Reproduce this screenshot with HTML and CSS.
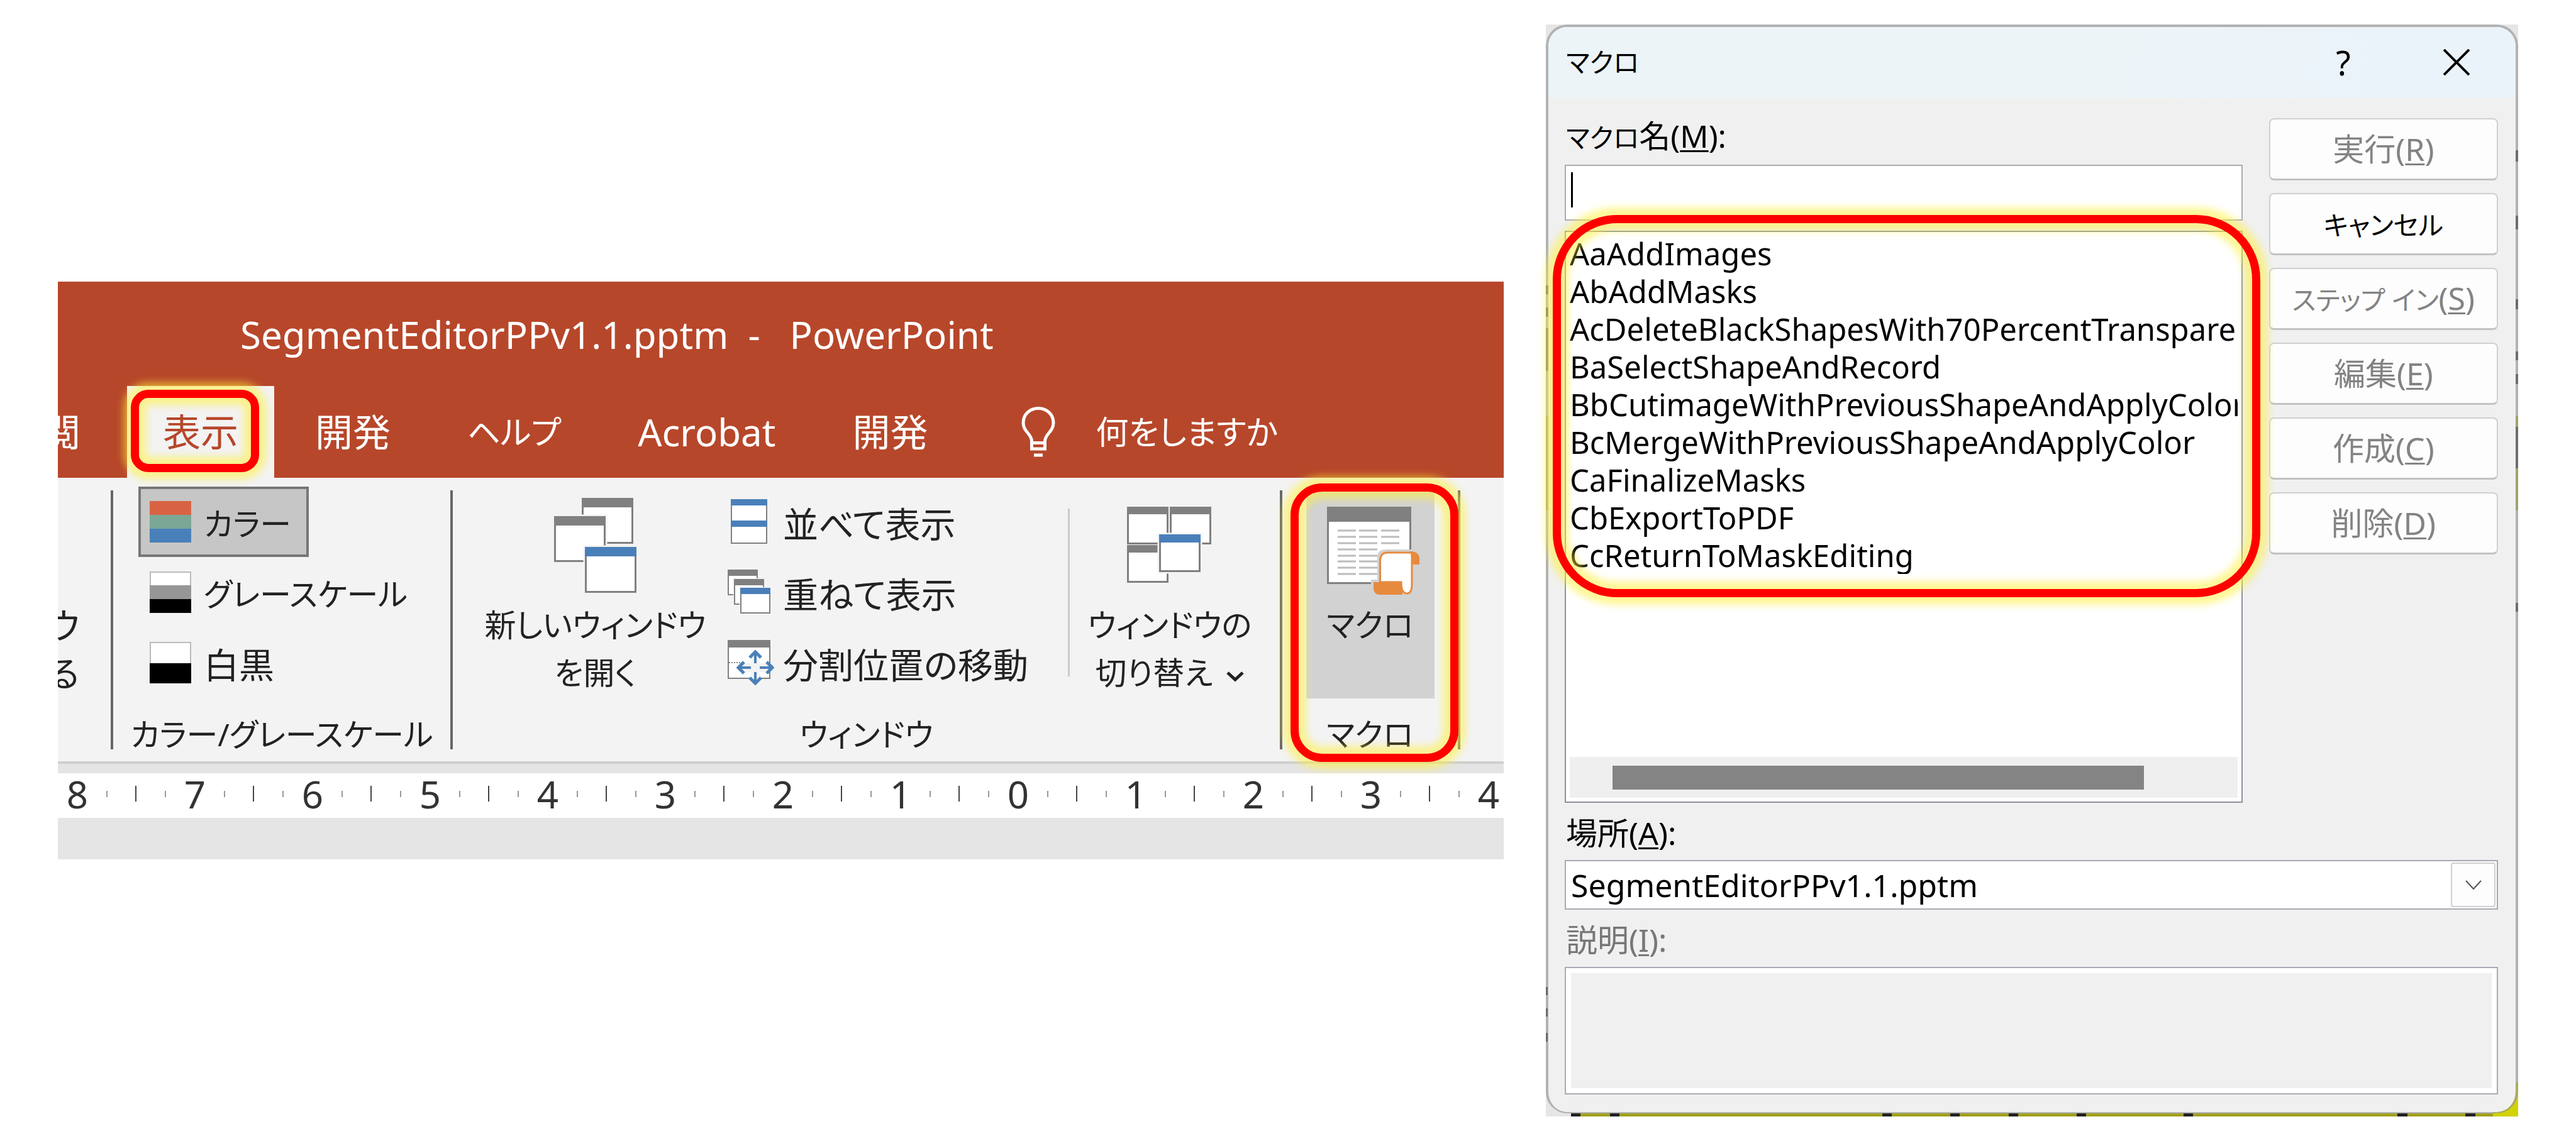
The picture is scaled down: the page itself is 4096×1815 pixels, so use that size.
FILE: index.html
```html
<!DOCTYPE html>
<html lang="ja">
<head>
<meta charset="utf-8">
<title>マクロ</title>
<link rel="stylesheet" href="styles.css">
</head>
<body>
<main class="page">
  <section class="app">
    <header class="app-header">
      <h1 class="app-title">SegmentEditorPPv1.1.pptm&nbsp; - &nbsp;&nbsp;PowerPoint</h1>
      <nav class="tabs">
        <a class="tab tab-cut" href="#">閲</a>
        <a class="tab tab-active" href="#">表示<span class="mark mark-tab"></span></a>
        <a class="tab" href="#">開発</a>
        <a class="tab tab-kana" href="#">ヘルプ</a>
        <a class="tab" href="#">Acrobat</a>
        <a class="tab" href="#">開発</a>
        <a class="tell-me" href="#">
          <svg class="bulb" width="54" height="80" viewBox="0 0 54 80" fill="none" stroke="#fff" stroke-width="5">
            <path d="M16.500 55C16.500 43 3 40 3 25.500C3 12 14 2.500 27 2.500S51 12 51 25.500C51 40 37.500 43 37.500 55M14 57.500H40M16.500 55V67H37.500V55M20 77H34"/>
          </svg>
          <span>何をしますか</span>
        </a>
      </nav>
    </header>

    <div class="ribbon">
      <div class="group group-cut"><span>ウ</span><span>る</span></div>
      <i class="sep"></i>
      <div class="group">
        <div class="rows rows-color">
          <button class="row-btn row-on" type="button">
            <svg width="66" height="66" viewBox="0 0 66 66"><path fill="#d86344" d="M0 0h66v22H0z"/><path fill="#7ba797" d="M0 22h66v22H0z"/><path fill="#4a80b9" d="M0 44h66v22H0z"/></svg>
            <span class="kana">カラー</span>
          </button>
          <button class="row-btn" type="button">
            <svg width="66" height="66" viewBox="0 0 66 66"><path fill="#fff" stroke="#bbb" stroke-width="2" d="M1 1h64v40H1z"/><path fill="#969696" d="M0 22h66v22H0z"/><path d="M0 44h66v22H0z"/></svg>
            <span class="kana">グレースケール</span>
          </button>
          <button class="row-btn" type="button">
            <svg width="66" height="66" viewBox="0 0 66 66"><path fill="#fff" stroke="#bbb" stroke-width="2" d="M1 1h64v40H1z"/><path d="M0 34h66v32H0z"/></svg>
            <span>白黒</span>
          </button>
        </div>
        <div class="group-name">カラー/グレースケール</div>
      </div>
      <i class="sep"></i>
      <div class="group">
        <div class="window-tools">
          <button class="big-btn big-new" type="button">
            <svg width="132" height="154" viewBox="0 0 132 154">
              <g fill="#fff" stroke="#808080" stroke-width="3">
                <path d="M45.500 1.500h79v70h-79z"/><path fill="#808080" d="M45.500 1.500h79v12h-79z"/>
                <path stroke="#f3f3f3" stroke-width="8" d="M1.500 30.500h79v70h-79z"/>
                <path d="M1.500 30.500h79v70h-79z"/><path fill="#808080" d="M1.500 30.500h79v12h-79z"/>
                <path stroke="#f3f3f3" stroke-width="8" d="M50.500 79.500h79v70h-79z"/>
                <path d="M50.500 79.500h79v70h-79z"/><path fill="#4a80b9" stroke="#4a80b9" d="M50.500 79.500h79v12h-79z"/>
              </g>
            </svg>
            <span>新しいウィンドウ<br>を開く</span>
          </button>
          <div class="rows">
            <button class="row-btn" type="button">
              <svg width="74" height="72" viewBox="0 0 74 72"><path fill="#fff" stroke="#808080" stroke-width="2" d="M6 1h56v69H6z"/><path fill="#4a80b9" d="M5 0h58v10H5zM5 34h58v10H5z"/></svg>
              <span>並べて表示</span>
            </button>
            <button class="row-btn" type="button">
              <svg width="74" height="72" viewBox="0 0 74 72"><g fill="#fff" stroke="#808080" stroke-width="2"><path d="M1 1h46v39H1z"/><path fill="#808080" d="M1 1h46v8H1z"/><path stroke="#f3f3f3" stroke-width="4" d="M11 16h46v39H11z"/><path d="M11 16h46v39H11z"/><path fill="#808080" d="M11 16h46v8H11z"/><path stroke="#f3f3f3" stroke-width="4" d="M21 30h46v39H21z"/><path d="M21 30h46v39H21z"/><path fill="#4a80b9" stroke="#4a80b9" d="M21 30h46v8H21z"/></g></svg>
              <span>重ねて表示</span>
            </button>
            <button class="row-btn" type="button">
              <svg width="74" height="72" viewBox="0 0 74 72"><path fill="#fff" stroke="#808080" stroke-width="2" d="M1 1h66v60H1z"/><path fill="#808080" d="M0 0h68v12H0z"/><path stroke="#808080" stroke-width="2" stroke-dasharray="2 2" d="M2 36h18"/><path fill="none" stroke="#f3f3f3" stroke-width="14" d="M44 20v48M18 44h52"/><g fill="none" stroke="#4a80b9" stroke-width="4"><path d="M44 37V20M44 51V68M37 44H18M51 44H70"/><path stroke-width="5" d="M35 28l9-9 9 9M35 60l9 9 9-9M26 35l-9 9 9 9M62 35l9 9-9 9"/></g></svg>
              <span>分割位置の移動</span>
            </button>
          </div>
          <i class="sep-light"></i>
          <button class="big-btn big-switch" type="button">
            <svg width="136" height="154" viewBox="0 -14 136 154">
              <g fill="#fff" stroke="#808080" stroke-width="3">
                <path d="M1.500 1.500h63v57h-63zM69.500 1.500h63v57h-63zM1.500 62.500h63v57h-63z"/>
                <path fill="#808080" d="M1.500 1.500h63v9h-63zM69.500 1.500h63v9h-63zM1.500 62.500h63v9h-63z"/>
                <path stroke="#f3f3f3" stroke-width="8" d="M52.500 45.500h63v57h-63z"/>
                <path d="M52.500 45.500h63v57h-63z"/><path fill="#4a80b9" stroke="#4a80b9" d="M52.500 45.500h63v10h-63z"/>
              </g>
            </svg>
            <span>ウィンドウの<br>切り替え<svg class="more" width="28" height="18" viewBox="0 0 28 18" fill="none" stroke="#222" stroke-width="5"><path d="M2 3l12 11L26 3"/></svg></span>
          </button>
        </div>
        <div class="group-name">ウィンドウ</div>
      </div>
      <i class="sep"></i>
      <div class="group group-macro">
        <button class="big-btn big-on" type="button">
          <svg width="156" height="154" viewBox="-9 -14 156 154">
            <path fill="#fff" stroke="#808080" stroke-width="3" d="M1.500 1.500h131v120H1.500z"/><path fill="#808080" d="M0 0h134v24H0z"/>
            <path fill="none" stroke="#bcbcbc" stroke-width="3" d="M17 38h29m5 0h29m6 0h29M17 48h29m5 0h29m6 0h29M17 58h29m5 0h29m6 0h29M17 68h29m5 0h29M17 78h29m5 0h29M17 87h29m5 0h29M17 97h29m5 0h29M17 107h29m5 0h29"/>
            <path fill="#d2d2d2" d="M80 140V80q0-12 14-12h52v54h-10v18H70v-24h10z"/>
            <path fill="#e68a3e" d="M132 71q15 0 15 12v9h-14zM74 120h46v20H84q-10 0-10-12z"/>
            <path fill="#fff" stroke="#e68a3e" stroke-width="3" d="M84.500 120V86q0-13 12-13H134q1 2 1 8v42q0 15-8 15-9 0-9-18z"/>
          </svg>
          <span>マクロ</span>
        </button>
        <div class="group-name">マクロ</div>
        <span class="mark mark-macro"></span>
      </div>
      <i class="sep"></i>
      <div></div>
    </div>

    <div class="ruler">
      <div class="cm"><i class="half"></i><i></i><b>8</b><i></i></div>
      <div class="cm"><i class="half"></i><i></i><b>7</b><i></i></div>
      <div class="cm"><i class="half"></i><i></i><b>6</b><i></i></div>
      <div class="cm"><i class="half"></i><i></i><b>5</b><i></i></div>
      <div class="cm"><i class="half"></i><i></i><b>4</b><i></i></div>
      <div class="cm"><i class="half"></i><i></i><b>3</b><i></i></div>
      <div class="cm"><i class="half"></i><i></i><b>2</b><i></i></div>
      <div class="cm"><i class="half"></i><i></i><b>1</b><i></i></div>
      <div class="cm"><i class="half"></i><i></i><b>0</b><i></i></div>
      <div class="cm"><i class="half"></i><i></i><b>1</b><i></i></div>
      <div class="cm"><i class="half"></i><i></i><b>2</b><i></i></div>
      <div class="cm"><i class="half"></i><i></i><b>3</b><i></i></div>
      <div class="cm"><i class="half"></i><i></i><b>4</b><i></i></div>
    </div>
  </section>

  <div class="backdrop">
    <section class="dialog">
      <header class="dialog-bar">
        <h2 class="dialog-title">マクロ</h2>
        <button class="bar-btn" type="button">?</button>
        <button class="bar-btn" type="button" aria-label="閉じる"><svg width="42" height="42" viewBox="0 0 42 42" fill="none" stroke="#000" stroke-width="4"><path d="M1 1l40 40M41 1L1 41"/></svg></button>
      </header>
      <form class="dialog-body">
        <div class="top">
          <div class="names">
            <label class="label" for="name"><span class="kana">マクロ</span>名(<u>M</u>):</label>
            <div class="name-box"><input class="name-input" id="name" type="text"><i class="caret"></i></div>
            <div class="list-box">
              <ul class="list">
                <li>AaAddImages</li>
                <li>AbAddMasks</li>
                <li>AcDeleteBlackShapesWith70PercentTransparency</li>
                <li>BaSelectShapeAndRecord</li>
                <li>BbCutimageWithPreviousShapeAndApplyColor</li>
                <li>BcMergeWithPreviousShapeAndApplyColor</li>
                <li>CaFinalizeMasks</li>
                <li>CbExportToPDF</li>
                <li>CcReturnToMaskEditing</li>
              </ul>
              <div class="scroll"><div class="thumb"></div></div>
              <span class="mark mark-list"></span>
            </div>
          </div>
          <div class="actions">
            <button class="btn" type="button" disabled>実行(<u>R</u>)</button>
            <button class="btn" type="button"><span class="kana">キャンセル</span></button>
            <button class="btn" type="button" disabled><span class="kana">ステップ イン</span>(<u>S</u>)</button>
            <button class="btn" type="button" disabled>編集(<u>E</u>)</button>
            <button class="btn" type="button" disabled>作成(<u>C</u>)</button>
            <button class="btn" type="button" disabled>削除(<u>D</u>)</button>
          </div>
        </div>
        <label class="label label-next" for="place">場所(<u>A</u>):</label>
        <div class="place-box">
          <select class="place" id="place"><option>SegmentEditorPPv1.1.pptm</option></select>
          <span class="drop"><svg width="26" height="16" viewBox="0 0 26 16" fill="none" stroke="#555" stroke-width="2"><path d="M1 1l12 13L25 1"/></svg></span>
        </div>
        <label class="label label-next label-off" for="about">説明(<u>I</u>):</label>
        <textarea class="about" id="about" disabled></textarea>
      </form>
    </section>
  </div>
</main>
</body>
</html>
```
FILE: styles.css
```css
* { box-sizing: border-box; }

body {
  margin: 0;
  background: #fff;
  color: #222;
  font-family: "Noto Sans", "Noto Sans CJK JP", sans-serif;
  font-size: 56px;
  font-feature-settings: "palt";
}

button, input, select, textarea {
  margin: 0;
  font: inherit;
  font-feature-settings: inherit;
  color: inherit;
}

button { padding: 0; border: 0; background: none; }
h1, h2 { margin: 0; font-weight: 400; }
a { color: inherit; text-decoration: none; }
svg { display: block; flex: none; }

.page {
  display: grid;
  grid-template-columns: 2299fr 1546fr;
  gap: 67px;
  align-items: center;
  min-height: 100vh;
  padding: 0 92px;
}

/* red outline with a yellow glow on both sides */
.mark {
  position: absolute;
  z-index: 2;
  border: 13px solid #f00;
  box-shadow: 0 0 12px 12px rgba(255, 241, 60, .55), inset 0 0 12px 12px rgba(255, 241, 60, .55);
  pointer-events: none;
}

/* application window */
.app {
  min-width: 0;
  overflow: hidden;
  background: #e5e5e5;
  padding-bottom: 66px;
}

.app-header { padding-top: 44px; background: #b7472a; color: #fff; }

.app-title {
  padding-left: 290px;
  font-size: 60px;
  line-height: 80px;
  white-space: nowrap;
}

.tabs {
  display: flex;
  gap: 8px;
  margin-top: 42px;
  font-size: 60px;
  line-height: 146px;
  white-space: nowrap;
}

.tab { flex: none; padding: 0 57px; }
.tab-cut { margin-left: -24px; padding: 0 66px 0 0; }
.tab-active { position: relative; background: #f3f3f3; color: #b7472a; }
.tab-kana { font-size: 52px; }
.mark-tab { inset: 6px 24px 9px 6px; border-radius: 28px; }
.tell-me { display: flex; align-items: center; gap: 64px; margin-left: 84px; font-size: 52px; }

.ribbon {
  display: grid;
  grid-template-columns: 84fr 4px 536fr 4px 1315fr 4px 279fr 4px 69fr;
  padding: 14px 0 19px;
  background: #f3f3f3;
  border-bottom: 4px solid #cfcfcf;
}

.sep { margin-top: 6px; background: #666; }
.sep-light { margin: 35px 0 35px; background: #cacaca; }

.group {
  position: relative;
  display: flex;
  flex-direction: column;
  justify-content: space-between;
  gap: 33px;
  min-width: 0;
  white-space: nowrap;
}

.group-name { line-height: 48px; text-align: center; font-size: 50px; }

.group-cut {
  justify-content: flex-start;
  align-items: flex-end;
  gap: 0;
  padding: 182px 50px 0 0;
  line-height: 76px;
}

.rows { display: flex; flex-direction: column; align-items: flex-start; }
.rows-color { padding-left: 40px; }

.row-btn {
  display: flex;
  align-items: center;
  gap: 20px;
  height: 112px;
  padding: 0 24px 0 14px;
  border: 4px solid transparent;
}

.row-btn .kana { font-size: 50px; }
.rows:not(.rows-color) .row-btn { padding: 0; gap: 14px; border-width: 0; }
.rows .row-on { background: #c6c6c6; border-color: #777; }

.window-tools { display: grid; grid-template-columns: 437fr 541fr 3px 334fr; }

.big-btn {
  display: flex;
  flex-direction: column;
  align-items: center;
  gap: 10px;
  height: 337px;
  padding-top: 18px;
  font-size: 50px;
  line-height: 76px;
}

.big-new { padding-left: 16px; }
.big-switch { padding-right: 16px; }
.more { display: inline-block; margin-left: 22px; vertical-align: middle; }
.group-macro { align-items: center; }
.big-on { width: 204px; background: #d2d2d2; }
.mark-macro { inset: -5px -1px -20px 13px; border-radius: 50px; }

.ruler {
  display: flex;
  height: 86px;
  margin-left: -86px;
  background: #fff;
  border-top: 15px solid #e4e4e4;
}

.cm {
  display: grid;
  grid-template-columns: repeat(4, 1fr);
  flex: 0 0 187px;
  align-items: center;
  justify-items: center;
  padding-bottom: 6px;
  color: #333;
  font-size: 60px;
  line-height: 64px;
}

.cm b { font-weight: 400; }
.cm i { width: 2px; height: 10px; background: #999; }
.cm .half { height: 25px; background: #444; }

/* macro dialog, over the slide that shows at its edges */
.backdrop {
  min-width: 0;
  background:
    linear-gradient(#222 0 0) 0 415px / 5px 14px,
    linear-gradient(#222 0 0) 0 450px / 5px 15px,
    linear-gradient(#55531c 0 0) 0 483px / 5px 68px,
    linear-gradient(#c8c820 0 0) 0 623px / 5px 150px,
    linear-gradient(#222 0 0) 0 1531px / 3px 13px,
    linear-gradient(#222 0 0) 0 1565px / 3px 13px,
    linear-gradient(#222 0 0) 0 1604px / 3px 14px,
    linear-gradient(#222 0 0) 100% 200px / 4px 18px,
    linear-gradient(#222 0 0) 100% 304px / 5px 22px,
    linear-gradient(#222 0 0) 100% 437px / 5px 16px,
    linear-gradient(#222 0 0) 100% 520px / 5px 14px,
    linear-gradient(#222 0 0) 100% 556px / 5px 16px,
    linear-gradient(#222 0 0) 100% 640px / 4px 66px,
    linear-gradient(#b4b420 0 0) 100% 623px / 5px 150px,
    linear-gradient(#222 0 0) 100% 920px / 5px 14px,
    linear-gradient(#d2d200 0 0) 100% 100% / 40px 54px,
    linear-gradient(90deg, #222 0 1%, transparent 1% 4%, #222 4% 5%, transparent 5% 32%, #222 32% 33%, transparent 33% 39%, #222 39% 40%, transparent 40% 45%, #222 45% 46%, transparent 46% 52%, #222 52% 53%, transparent 53% 63%, #222 63% 64%, transparent 64% 85%, #222 85% 86%, transparent 86% 92%, #222 92% 93%, transparent 93% 96%, #222 96% 97%, transparent 97%) 40px 100% / 100% 5px,
    linear-gradient(#a0a020 0 0) 40px 100% / 100% 5px,
    #e6e6e6;
  background-repeat: no-repeat;
}

.dialog {
  margin-bottom: 5px;
  border: 4px solid rgba(150, 150, 150, .65);
  border-bottom-width: 2px;
  border-radius: 34px;
  background: #f0f0f0 padding-box;
  color: #000;
  font-size: 50px;
}

.dialog .kana { font-size: 42px; }

.dialog-bar {
  display: flex;
  align-items: center;
  height: 112px;
  padding: 0 20px 0 28px;
  border-radius: 30px 30px 0 0;
  background: linear-gradient(100deg, #ecf4f8 60%, #ebf3fa 85%);
}

.dialog-title { flex: 1; font-size: 42px; line-height: 60px; }

.bar-btn {
  display: flex;
  align-items: center;
  justify-content: center;
  width: 180px;
  height: 112px;
  padding-left: 32px;
  font-size: 54px;
  line-height: 60px;
}

.dialog-body { display: flex; flex-direction: column; padding: 31px 28px 28px 26px; }
.top { display: grid; grid-template-columns: 1077fr 364fr; gap: 42px; }
.names { display: flex; flex-direction: column; min-width: 0; }
.label { padding-left: 2px; margin-bottom: 13px; line-height: 60px; }
.label-next { margin-top: 18px; }
.label-off { color: #777; }
u { text-decoration-thickness: 3px; text-underline-offset: 4px; }

.name-box { position: relative; height: 89px; margin-bottom: 16px; }

.name-input {
  display: block;
  width: 100%;
  height: 100%;
  padding: 0 10px;
  border: 2px solid #a9abb3;
  background: #fff;
}

.caret { position: absolute; left: 10px; top: 12px; width: 3px; height: 56px; background: #000; }

.list-box {
  position: relative;
  display: flex;
  flex-direction: column;
  justify-content: space-between;
  min-height: 910px;
  padding: 4px 6px 6px;
  border: 2px solid #8c909a;
  background: #fff;
}

.list {
  margin: 0;
  padding: 0;
  overflow: hidden;
  list-style: none;
  font-size: 49px;
  line-height: 60px;
  white-space: nowrap;
}

.scroll { display: flex; align-items: center; height: 65px; padding-left: 68px; background: #efefef; }
.thumb { width: 85%; height: 38px; background: #848484; }
.mark-list { left: -21px; right: -30px; top: -27px; height: 608px; border-radius: 102px; }

.actions { display: flex; flex-direction: column; gap: 20px; padding-top: 2px; }

.btn {
  height: 99px;
  border: 2px solid #d0d0d0;
  border-bottom: 3px solid #c2c2c2;
  border-radius: 8px;
  background: #fdfdfd;
  line-height: 60px;
  white-space: nowrap;
}

.btn:disabled { color: #838383; }

.place-box { position: relative; height: 79px; }

.place {
  appearance: none;
  display: block;
  width: 100%;
  height: 100%;
  padding: 0 90px 0 8px;
  border: 2px solid #a9abb3;
  border-radius: 0;
  background: #fff;
}

.drop {
  position: absolute;
  top: 4px;
  right: 4px;
  bottom: 4px;
  display: flex;
  align-items: center;
  justify-content: center;
  width: 71px;
  border: 2px solid #d0d0d0;
  border-radius: 4px;
  background: #fdfdfd;
  pointer-events: none;
}

.about {
  display: block;
  width: 100%;
  height: 203px;
  padding: 0;
  resize: none;
  border: 2px solid #a9abb3;
  background: #f0f0f0;
  box-shadow: inset 0 0 0 8px #fff;
}
```
